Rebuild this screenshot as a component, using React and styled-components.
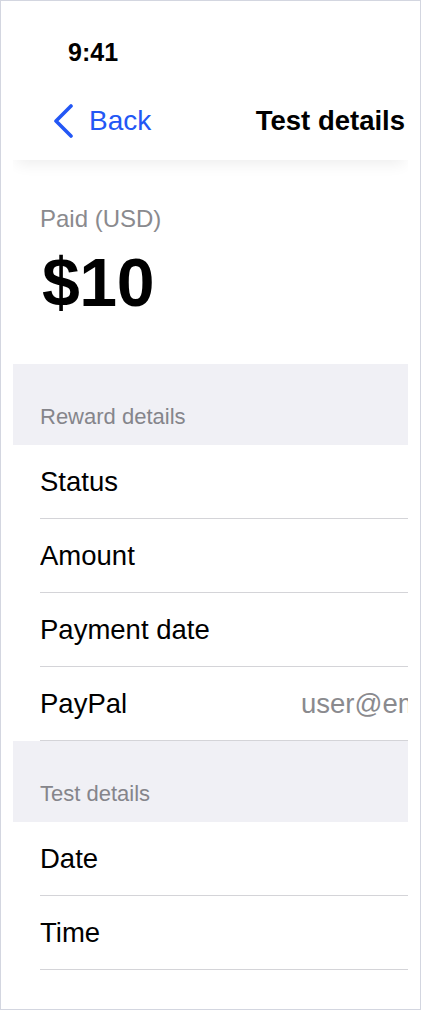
import styled, { createGlobalStyle } from 'styled-components';

const GlobalStyle = createGlobalStyle`
	html,
	body {
		margin: 0;
		padding: 0;
		background: #ffffff;
	}

	body {
		font-family: 'Liberation Sans', Arial, sans-serif;
		-webkit-font-smoothing: antialiased;
	}
`;

const Frame = styled.div`
	box-sizing: border-box;
	width: 421px;
	height: 1010px;
	padding: 0 12px;
	border: 1px solid #d3d6e0;
	background: #ffffff;
	overflow: hidden;
`;

const Column = styled.div`
	width: 395px;
	height: 100%;
	overflow: hidden;
	display: flex;
	flex-direction: column;
`;

const Header = styled.header`
	position: relative;
	z-index: 1;
	height: 159px;
	background: #ffffff;
	box-shadow: 0 8px 14px -4px rgba(0, 0, 0, 0.07);
`;

const StatusBar = styled.div`
	padding: 39px 0 0 55px;
	font-size: 25px;
	line-height: 25px;
	font-weight: 700;
	color: #000000;
`;

const NavBar = styled.nav`
	box-sizing: border-box;
	height: 95px;
	padding: 16px 3px 0 40px;
	display: flex;
	align-items: center;
`;

const BackButton = styled.button`
	display: flex;
	align-items: center;
	gap: 16px;
	padding: 0;
	border: none;
	background: none;
	font-family: inherit;
	font-size: 28px;
	line-height: 34px;
	color: #2357f5;
	cursor: pointer;
`;

const Title = styled.h1`
	margin: 0 0 0 auto;
	font-size: 27.5px;
	line-height: 34px;
	font-weight: 700;
	color: #000000;
`;

const Summary = styled.section`
	padding: 47px 0 48px 27px;
`;

const SummaryLabel = styled.div`
	font-size: 24px;
	line-height: 24px;
	color: #8a8a8e;
`;

const SummaryValue = styled.div`
	margin-top: 18px;
	padding-left: 2px;
	font-size: 68px;
	line-height: 67px;
	font-weight: 700;
	letter-spacing: -0.5px;
	color: #000000;
`;

const SectionHeader = styled.div`
	box-sizing: border-box;
	height: 81px;
	padding: 0 0 17px 27px;
	display: flex;
	align-items: flex-end;
	background: #f0f0f5;
	font-size: 22px;
	line-height: 22px;
	color: #85858b;
`;

const Row = styled.div`
	box-sizing: border-box;
	height: 74px;
	margin-left: 27px;
	padding-top: 1px;
	display: grid;
	grid-template-columns: 261px 1fr;
	align-items: center;
	border-bottom: 1px solid #d4d4d8;
	overflow: hidden;
	font-size: 27.5px;
	line-height: 34px;
`;

const RowLabel = styled.span`
	color: #000000;
	white-space: nowrap;
`;

const RowValue = styled.span`
	color: #8a8a8e;
	white-space: nowrap;
`;

const ChevronLeft = () => (
	<svg width='20' height='34' viewBox='0 0 20 34' fill='none'>
		<path
			d='M18 2 L3 17 L18 32'
			stroke='currentColor'
			strokeWidth='3.6'
			strokeLinecap='round'
			strokeLinejoin='round'
		/>
	</svg>
);

const sections = [
	{
		title: 'Reward details',
		rows: [
			{ label: 'Status' },
			{ label: 'Amount' },
			{ label: 'Payment date' },
			{ label: 'PayPal', value: 'user@email.com' },
		],
	},
	{
		title: 'Test details',
		rows: [{ label: 'Date' }, { label: 'Time' }],
	},
];

const App = () => {
	return (
		<>
			<GlobalStyle />
			<Frame>
				<Column>
					<Header>
						<StatusBar>9:41</StatusBar>
						<NavBar>
							<BackButton>
								<ChevronLeft />
								Back
							</BackButton>
							<Title>Test details</Title>
						</NavBar>
					</Header>
					<Summary>
						<SummaryLabel>Paid (USD)</SummaryLabel>
						<SummaryValue>$10</SummaryValue>
					</Summary>
					{sections.map((section) => (
						<div key={section.title}>
							<SectionHeader>{section.title}</SectionHeader>
							{section.rows.map((row) => (
								<Row key={row.label}>
									<RowLabel>{row.label}</RowLabel>
									{row.value && <RowValue>{row.value}</RowValue>}
								</Row>
							))}
						</div>
					))}
				</Column>
			</Frame>
		</>
	);
};

export default App;
